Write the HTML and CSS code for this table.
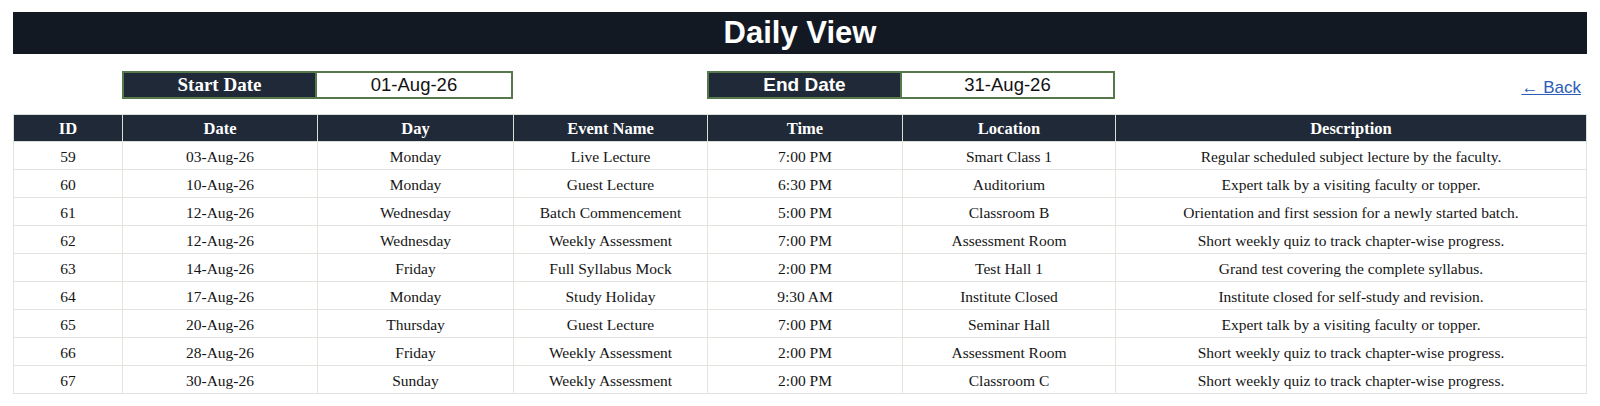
FILE: index.html
```html
<!DOCTYPE html>
<html>
<head>
<meta charset="utf-8">
<link rel="stylesheet" href="styles.css">
</head>
<body>
<div class="page">
  <header class="title-bar"><h1>Daily View</h1></header>
  <div class="filters">
    <div class="f-label serif start">Start Date</div>
    <div class="f-value">01-Aug-26</div>
    <div class="f-label sans end">End Date</div>
    <div class="f-value end-val">31-Aug-26</div>
    <a class="back" href="#">← Back</a>
  </div>
  <table class="events">
    <colgroup>
      <col class="c-id"><col class="c-date"><col class="c-day"><col class="c-name"><col class="c-time"><col class="c-loc"><col class="c-desc">
    </colgroup>
    <thead>
      <tr><th>ID</th><th>Date</th><th>Day</th><th>Event Name</th><th>Time</th><th>Location</th><th>Description</th></tr>
    </thead>
    <tbody>
      <tr><td>59</td><td>03-Aug-26</td><td>Monday</td><td>Live Lecture</td><td>7:00 PM</td><td>Smart Class 1</td><td>Regular scheduled subject lecture by the faculty.</td></tr>
      <tr><td>60</td><td>10-Aug-26</td><td>Monday</td><td>Guest Lecture</td><td>6:30 PM</td><td>Auditorium</td><td>Expert talk by a visiting faculty or topper.</td></tr>
      <tr><td>61</td><td>12-Aug-26</td><td>Wednesday</td><td>Batch Commencement</td><td>5:00 PM</td><td>Classroom B</td><td>Orientation and first session for a newly started batch.</td></tr>
      <tr><td>62</td><td>12-Aug-26</td><td>Wednesday</td><td>Weekly Assessment</td><td>7:00 PM</td><td>Assessment Room</td><td>Short weekly quiz to track chapter-wise progress.</td></tr>
      <tr><td>63</td><td>14-Aug-26</td><td>Friday</td><td>Full Syllabus Mock</td><td>2:00 PM</td><td>Test Hall 1</td><td>Grand test covering the complete syllabus.</td></tr>
      <tr><td>64</td><td>17-Aug-26</td><td>Monday</td><td>Study Holiday</td><td>9:30 AM</td><td>Institute Closed</td><td>Institute closed for self-study and revision.</td></tr>
      <tr><td>65</td><td>20-Aug-26</td><td>Thursday</td><td>Guest Lecture</td><td>7:00 PM</td><td>Seminar Hall</td><td>Expert talk by a visiting faculty or topper.</td></tr>
      <tr><td>66</td><td>28-Aug-26</td><td>Friday</td><td>Weekly Assessment</td><td>2:00 PM</td><td>Assessment Room</td><td>Short weekly quiz to track chapter-wise progress.</td></tr>
      <tr><td>67</td><td>30-Aug-26</td><td>Sunday</td><td>Weekly Assessment</td><td>2:00 PM</td><td>Classroom C</td><td>Short weekly quiz to track chapter-wise progress.</td></tr>
    </tbody>
  </table>
</div>
</body>
</html>
```

FILE: styles.css
```css
* { box-sizing: border-box; }
html, body { margin: 0; padding: 0; background: #ffffff; }
.page {
  padding: 12px 13px 0 13px;
  width: 1600px;
}
.title-bar {
  background: #121923;
  height: 42px;
  display: flex;
  align-items: center;
  justify-content: center;
}
.title-bar h1 {
  margin: 0;
  color: #ffffff;
  font-family: "Liberation Sans", Arial, sans-serif;
  font-weight: bold;
  font-size: 31px;
  line-height: 42px;
}
.filters {
  display: grid;
  grid-template-columns: 109px 195px 196px 194px 195px 213px 471px;
  height: 28px;
  margin-top: 17px;
  align-items: stretch;
}
.f-label {
  grid-column: 2;
  background: #1f2937;
  color: #ffffff;
  font-weight: bold;
  font-size: 19px;
  border: 2px solid #56784a;
  display: flex;
  align-items: center;
  justify-content: center;
}
.f-label.end { grid-column: 5; }
.serif { font-family: "Liberation Serif", "Times New Roman", serif; }
.sans { font-family: "Liberation Sans", Arial, sans-serif; }
.f-value {
  grid-column: 3;
  background: #ffffff;
  color: #111111;
  font-family: "Liberation Sans", Arial, sans-serif;
  font-size: 18.5px;
  border: 2px solid #56784a;
  border-left: 0;
  display: flex;
  align-items: center;
  justify-content: center;
}
.f-value.end-val { grid-column: 6; }
.back {
  grid-column: 7;
  justify-self: end;
  align-self: center;
  margin-right: 5px;
  margin-top: 5px;
  color: #2b5cb8;
  font-family: "Liberation Sans", Arial, sans-serif;
  font-size: 17px;
  text-decoration: underline;
}
.events {
  margin-top: 15px;
  width: 1573px;
  border-collapse: collapse;
  table-layout: fixed;
  font-family: "Liberation Serif", "Times New Roman", serif;
}
.c-id { width: 109px; }
.c-date { width: 195px; }
.c-day { width: 196px; }
.c-name { width: 194px; }
.c-time { width: 195px; }
.c-loc { width: 213px; }
.c-desc { width: 471px; }
.events th {
  background: #1f2937;
  color: #ffffff;
  font-weight: bold;
  font-size: 16.5px;
  height: 27px;
  padding: 1px 0 0 0;
  border: 1px solid #d9dfd7;
  text-align: center;
  vertical-align: middle;
}
.events td {
  color: #151515;
  font-size: 15.5px;
  height: 28px;
  padding: 2px 0 0 0;
  border: 1px solid #e0e6dd;
  text-align: center;
  vertical-align: middle;
}
```
